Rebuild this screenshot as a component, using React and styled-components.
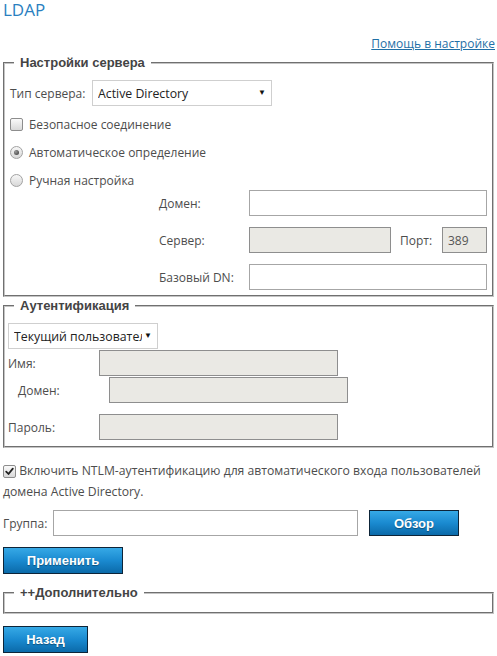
import React from 'react';
import styled, { createGlobalStyle } from 'styled-components';

const GlobalStyle = createGlobalStyle`
	body {
		margin: 0;
		background: #fff;
		font-family: "Open Sans", "Noto Sans", sans-serif;
		font-size: 12px;
		color: #4d4d4d;
	}
`;

const Page = styled.div`
	width: 491px;
	padding: 1px 3px 0 3px;
`;

const Title = styled.h1`
	margin: 0;
	font-size: 17px;
	font-weight: 400;
	line-height: 17px;
	color: #2a7fbf;
`;

const HelpRow = styled.div`
	margin-top: 18px;
	text-align: right;
	line-height: 16px;
`;

const HelpLink = styled.a`
	color: #1f6fa6;
	text-decoration: underline;
	font-size: 12px;
	margin-right: -1px;
`;

const Fieldset = styled.fieldset`
	margin: ${p => p.$mt || 0}px 0 0;
	padding: ${p => p.$pt ?? 9}px 5px ${p => p.$pb || 6}px 3px;
	border: 2px groove #c4c4c4;
	min-width: 0;
`;

const Legend = styled.legend`
	margin-left: 6px;
	padding: 0 6px;
	font-family: "Liberation Sans", Arial, sans-serif;
	font-weight: 700;
	font-size: 13px;
	line-height: 16px;
	color: #444;
`;

const Inner = styled.div`
	padding-left: 2px;
`;

const Row = styled.div`
	display: flex;
	align-items: center;
	margin-top: ${p => p.$mt || 0}px;
	margin-left: ${p => p.$indent || 0}px;
	height: ${p => p.$h || 26}px;
`;

const Label = styled.span`
	flex: none;
	width: ${p => (p.$w ? `${p.$w}px` : 'auto')};
	margin-left: ${p => p.$ml || 0}px;
	white-space: nowrap;
`;

const SelectBox = styled.div`
	display: flex;
	align-items: center;
	width: ${p => p.$w}px;
	height: 26px;
	box-sizing: border-box;
	border: 1px solid #cfcfcf;
	background: #fff;
	padding: 0 5px 0 5px;
	color: #222;
	font-size: 12.3px;
`;

const SelectText = styled.span`
	flex: 1;
	min-width: 0;
	overflow: hidden;
	white-space: nowrap;
`;

const Arrow = styled.span`
	flex: none;
	font-size: 8px;
	color: #111;
	margin-left: 2px;
	margin-top: -3px;
`;

const TextInput = styled.div`
	flex: none;
	width: ${p => p.$w}px;
	height: 26px;
	box-sizing: border-box;
	border: 1px solid ${p => (p.$disabled ? '#8e8e8e' : '#a6a6a6')};
	background: ${p => (p.$disabled ? '#eae9e4' : '#fff')};
	margin-left: ${p => p.$ml || 0}px;
	padding: 4px 0 0 5px;
	color: #555;
	font-size: 12px;
	line-height: 18px;
`;

const OptionRow = styled.label`
	display: flex;
	align-items: center;
	gap: 6px;
	height: 20px;
	margin-top: 8px;
`;

const Box = styled.span`
	display: inline-flex;
	align-items: center;
	justify-content: center;
	flex: none;
	width: 11px;
	height: 11px;
	border: 1px solid #8d8d8d;
	border-radius: 2px;
	background: linear-gradient(#fafafa, #d9d9d9);
	vertical-align: -1px;
`;

const Radio = styled.span`
	display: inline-flex;
	align-items: center;
	justify-content: center;
	flex: none;
	width: 11px;
	height: 11px;
	border: 1px solid #a2a2a2;
	border-radius: 50%;
	background: linear-gradient(#f7f7f7, #d8d8d8);

	&::after {
		content: '';
		display: ${p => (p.$checked ? 'block' : 'none')};
		width: 5px;
		height: 5px;
		border-radius: 50%;
		background: radial-gradient(circle at 35% 35%, #9a9a9a, #333);
	}
`;

const Manual = styled.div`
	margin-left: 149px;
	display: flex;
	flex-direction: column;
	gap: 11px;
`;

const Note = styled.p`
	margin: 12px 0 0;
	line-height: 21px;
	font-size: 12.2px;
`;

const CheckMark = () => (
	<svg width="9" height="9" viewBox="0 0 9 9">
		<path d="M1.2 4.6 L3.5 7 L7.8 1.6" fill="none" stroke="#222" strokeWidth="1.8" strokeLinecap="round" strokeLinejoin="round" />
	</svg>
);

const Button = styled.button`
	display: block;
	flex: none;
	width: ${p => p.$w}px;
	height: ${p => p.$h || 27}px;
	margin: ${p => p.$mt || 0}px 0 0 ${p => p.$ml || 0}px;
	padding: 0;
	box-sizing: border-box;
	border: 1px solid #0d2438;
	background: linear-gradient(#36a9e6, #1a8ad0 50%, #0b6aa9);
	color: #fff;
	font-family: "Liberation Sans", Arial, sans-serif;
	font-weight: 700;
	font-size: 13px;
	text-shadow: 0 1px 1px rgba(0, 0, 0, 0.35);
	cursor: pointer;
`;

export default function App() {
	return (
		<Page>
			<GlobalStyle />
			<Title>LDAP</Title>
			<HelpRow>
				<HelpLink href="#">Помощь в настройке</HelpLink>
			</HelpRow>

			<Fieldset $mt={3} $pb={5}>
				<Legend>Настройки сервера</Legend>
				<Inner>
					<Row>
						<Label $w={82}>Тип сервера:</Label>
						<SelectBox $w={180}>
							<SelectText>Active Directory</SelectText>
							<Arrow>▼</Arrow>
						</SelectBox>
					</Row>
					<OptionRow>
						<Box />
						Безопасное соединение
					</OptionRow>
					<OptionRow>
						<Radio $checked />
						Автоматическое определение
					</OptionRow>
					<OptionRow>
						<Radio />
						Ручная настройка
					</OptionRow>
					<Manual>
						<Row>
							<Label $w={90}>Домен:</Label>
							<TextInput $w={238} />
						</Row>
						<Row>
							<Label $w={90}>Сервер:</Label>
							<TextInput $w={142} $disabled />
							<Label $w={42} $ml={9}>Порт:</Label>
							<TextInput $w={45} $disabled>389</TextInput>
						</Row>
						<Row>
							<Label $w={90}>Базовый DN:</Label>
							<TextInput $w={238} />
						</Row>
					</Manual>
				</Inner>
			</Fieldset>

			<Fieldset $mt={1}>
				<Legend>Аутентификация</Legend>
				<SelectBox $w={150}>
					<SelectText>Текущий пользователь</SelectText>
					<Arrow>▼</Arrow>
				</SelectBox>
				<Row $mt={1}>
					<Label $w={91}>Имя:</Label>
					<TextInput $w={239} $disabled />
				</Row>
				<Row $mt={1} $indent={10}>
					<Label $w={91}>Домен:</Label>
					<TextInput $w={239} $disabled />
				</Row>
				<Row $mt={11}>
					<Label $w={91}>Пароль:</Label>
					<TextInput $w={239} $disabled />
				</Row>
			</Fieldset>

			<Note>
				<Box>
					<CheckMark />
				</Box>{' '}
				Включить NTLM-аутентификацию для автоматического входа пользователей домена Active Directory.
			</Note>

			<Row $mt={8}>
				<Label $w={50}>Группа:</Label>
				<TextInput $w={305} />
				<Button $w={90} $ml={11} $h={26}>Обзор</Button>
			</Row>

			<Button $w={120} $mt={11}>Применить</Button>

			<Fieldset $mt={11} $pt={0} $pb={11}>
				<Legend>++Дополнительно</Legend>
			</Fieldset>

			<Button $w={85} $mt={12}>Назад</Button>
		</Page>
	);
}
